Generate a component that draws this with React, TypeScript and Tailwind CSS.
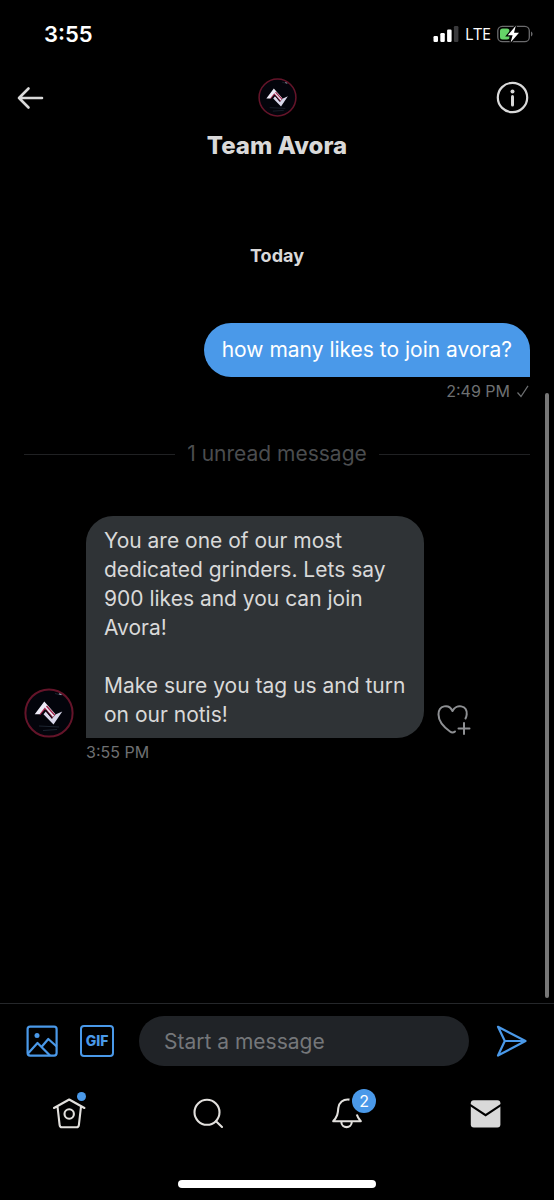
import { useState } from 'react';

function Avatar({ className }: { className: string }) {
  return (
    <svg viewBox="0 0 50 50" className={className} role="img" aria-label="Team Avora">
      <circle cx="25" cy="25" r="23.6" fill="#03040b" stroke="#641429" strokeWidth="2" />
      <path d="M31 5.500l5 1.200M19 42.500l14-1M15 38l20 1" stroke="#1c2430" strokeWidth="1" fill="none" />
      <path d="M35 5.800l2.500 1" stroke="#9aa3b5" strokeWidth="1.200" />
      {/* left half of the mark, then the right half */}
      <path d="M15.500 26.300l5.500-6.500 8 10.200" stroke="#a3264d" strokeWidth="2" fill="none" />
      <path d="M10.700 26.300L20.300 13.500 31.500 26.300 29 29 20.800 19.500 15.500 26.300z" fill="#eceaf6" />
      <path d="M22.500 18l8.500 9.500" stroke="#a3264d" strokeWidth="1.400" />
      <path d="M38.300 23.500L29.500 36.500 19.500 26.300 21.800 23.500 28 30.500 32 26.300z" fill="#d9d7ea" />
      <path d="M21.500 22l6.800 8.300" stroke="#12060f" strokeWidth="1.200" />
    </svg>
  );
}

function StatusBar() {
  return (
    <div className="flex items-center justify-between h-17 pl-11 pr-[21px]">
      <span className="text-[22px] leading-7 font-semibold text-white">3:55</span>
      <div className="flex items-center gap-[6px]">
        <svg width="26" height="16" viewBox="0 0 26 16" aria-hidden="true">
          <rect x="0.500" y="10" width="4.500" height="6" rx="1.200" fill="#fff" />
          <rect x="7.300" y="7" width="4.500" height="9" rx="1.200" fill="#fff" />
          <rect x="14.100" y="3.500" width="4.500" height="12.500" rx="1.200" fill="#fff" />
          <rect x="20.900" y="0" width="4.500" height="16" rx="1.200" fill="#3a3a3c" />
        </svg>
        <span className="font-['Open_Sans','Noto_Sans',sans-serif] text-base leading-6 font-medium text-white">LTE</span>
        <svg width="36" height="18" viewBox="0 0 36 18" aria-hidden="true">
          <rect x="0.800" y="1.300" width="31.500" height="15.400" rx="4.500" fill="none" stroke="#6b6b6d" strokeWidth="1.300" />
          <path d="M34 6.500c2 .8 2 4.200 0 5z" fill="#6b6b6d" />
          <rect x="3" y="3.500" width="9.500" height="11" rx="2.500" fill="#65d268" />
          <path d="M18.800 0.800L10.800 10.200h4.800L13.600 17.500l8.400-9.800h-5z" fill="#fff" stroke="#000" strokeWidth="2.400" paintOrder="stroke" />
        </svg>
      </div>
    </div>
  );
}

function ChatHeader() {
  return (
    <header className="flex flex-col items-center">
      <div className="flex items-center justify-between w-full h-[59px] pl-4 pr-[25px]">
        <button type="button" aria-label="Back" className="w-[42px]">
          <svg width="28" height="24" viewBox="0 0 28 24" fill="none" stroke="#d9d9d9" strokeWidth="2.600" strokeLinecap="round" strokeLinejoin="round">
            <path d="M26 12H3M12.500 2.500L3 12l9.500 9.500" />
          </svg>
        </button>
        <Avatar className="size-[39px]" />
        <button type="button" aria-label="Conversation info">
          <svg width="33" height="33" viewBox="0 0 33 33" fill="none">
            <circle cx="16.500" cy="16.500" r="14.700" stroke="#d9d9d9" strokeWidth="2.200" />
            <circle cx="16.500" cy="10.500" r="2" fill="#d9d9d9" />
            <path d="M16.500 15.500v8.500" stroke="#d9d9d9" strokeWidth="3" strokeLinecap="round" />
          </svg>
        </button>
      </div>
      <h1 className="mt-[3px] text-2xl leading-8 font-extrabold text-[#d9d9d9]">Team Avora</h1>
    </header>
  );
}

function Messages() {
  return (
    <main className="relative flex-1 px-6 pt-[82px] text-[21px]">
      <h2 className="text-center text-lg leading-6 font-bold text-[#d9d9d9]">Today</h2>

      {/* Sent */}
      <div className="flex flex-col items-end mt-[55px]">
        <p className="rounded-[27px] rounded-br-none bg-[#4a99e9] px-[18px] py-3 leading-[30px] text-white">
          how many likes to join avora?
        </p>
        <div className="flex items-center gap-[6px] mt-1 text-base leading-5 text-[#6e7072]">
          <span>2:49 PM</span>
          <svg width="14" height="14" viewBox="0 0 14 14" fill="none" stroke="#6e7072" strokeWidth="1.200" role="img" aria-label="Sent">
            <path d="M1.500 8.500l3.500 4L12 1.800" />
          </svg>
        </div>
      </div>

      <div className="flex items-center gap-3 mt-[38px] leading-[30px] text-[#4b4d4f]">
        <span className="h-px flex-1 bg-[#202123]" />
        <span>1 unread message</span>
        <span className="h-px flex-1 bg-[#202123]" />
      </div>

      {/* Received */}
      <div className="flex items-end mt-[47px]">
        <Avatar className="size-[50px] shrink-0" />
        <div className="ml-3 w-[338px] rounded-[27px] rounded-bl-none bg-[#2f3336] pl-[18px] pr-3 pt-[10px] pb-[9px] leading-[29px] text-[#d9d9d9]">
          <p>You are one of our most dedicated grinders. Lets say 900 likes and you can join Avora!</p>
          <p className="mt-[29px]">Make sure you tag us and turn on our notis!</p>
        </div>
        <button type="button" aria-label="Add reaction" className="ml-3 shrink-0">
          <svg width="36" height="34" viewBox="0 0 36 34" fill="none" stroke="#8e9093" strokeWidth="2" strokeLinecap="round" strokeLinejoin="round">
            <path d="M19 27.500C17.500 28.800 15.500 28.700 14 27.500 7 22.500 2.500 16.500 2.500 10.500 2.500 1 13-.5 16.500 7c3.500-7.500 15-6 14.200 3.500-.1 1.500-.5 2.500-1.200 4" />
            <path d="M28 19v11M22.500 24.500h11" />
          </svg>
        </button>
      </div>
      <div className="ml-[62px] mt-1 text-base leading-5 text-[#6e7072]">3:55 PM</div>

      <div className="absolute right-[5px] top-[231px] bottom-[5px] w-1 rounded-full bg-[#777]" />
    </main>
  );
}

function Composer() {
  const [text, setText] = useState('');

  return (
    <form onSubmit={(e) => e.preventDefault()} className="flex items-center border-t border-[#25272a] pl-[26px] pr-[27px] pt-3 pb-3">
      <button type="button" aria-label="Add photo">
        <svg width="32" height="32" viewBox="0 0 32 32" fill="none" stroke="#4a99e9" strokeWidth="2.200" strokeLinejoin="round">
          <rect x="1.600" y="1.600" width="29" height="29" rx="2.500" />
          <circle cx="11" cy="10.500" r="2.500" fill="#4a99e9" stroke="none" />
          <path d="M2 28.500l9.500-10.500L24 30.500M15.700 21.700l6.600-7.700 8.400 7.500" />
        </svg>
      </button>
      <button
        type="button"
        aria-label="Add GIF"
        className="ml-[22px] flex h-8 w-[34px] items-center justify-center rounded border-2 border-[#4a99e9] text-sm leading-4 font-extrabold text-[#4a99e9]"
      >
        GIF
      </button>
      <input
        type="text"
        aria-label="Message"
        placeholder="Start a message"
        value={text}
        onChange={(e) => setText(e.target.value)}
        className="ml-[25px] h-[50px] min-w-0 flex-1 rounded-full bg-[#202327] px-[25px] text-[21px] text-[#d9d9d9] placeholder:text-[#75777a] focus:outline-none"
      />
      <button type="submit" aria-label="Send" className="ml-[27px]">
        <svg width="31" height="32" viewBox="0 0 31 32" fill="none" stroke="#4a99e9" strokeWidth="2.200" strokeLinejoin="round">
          <path d="M2 1.800L29.500 16 2 30.500 8.800 16zM8.800 16h20" />
        </svg>
      </button>
    </form>
  );
}

function TabBar() {
  return (
    <nav className="grid grid-cols-4 justify-items-center pt-[18px]">
      <a href="#home" aria-label="Home" className="relative">
        <svg width="36" height="36" viewBox="0 0 36 36" fill="none" stroke="#e2e0dd" strokeWidth="2.100" strokeLinecap="round" strokeLinejoin="round">
          <path d="M3 12L18.200 3.500 33.400 12M6.500 10.500l2.100 18.300q.3 2.500 2.400 2.500h14.500q2.100 0 2.400-2.500l2.100-18.300" />
          <circle cx="18.200" cy="18" r="4.700" />
        </svg>
        <span className="absolute left-[26px] -top-1 size-[9px] rounded-full bg-[#4a99e9]" />
      </a>
      <a href="#search" aria-label="Search">
        <svg width="36" height="36" viewBox="0 0 36 36" fill="none" stroke="#e2e0dd" strokeWidth="2.100" strokeLinecap="round">
          <circle cx="17" cy="16.300" r="12.500" />
          <path d="M26 25.200l6 5.800" />
        </svg>
      </a>
      <a href="#notifications" aria-label="Notifications" className="relative">
        <svg width="36" height="36" viewBox="0 0 36 36" fill="none" stroke="#e2e0dd" strokeWidth="2.100" strokeLinejoin="round">
          <path d="M21.500 3.600C15 2.600 10.800 7 10.300 12c-.4 6-1 8.500-5.100 13.300h27.600c-2-2.300-3.300-4.300-4-6.800" />
          <path d="M13.300 25.500c0 7.500 10.500 7.500 10.500 0" />
        </svg>
        <span className="absolute left-6 -top-[7px] flex size-6 items-center justify-center rounded-full bg-[#4a99e9] text-base leading-6 text-white">2</span>
      </a>
      <a href="#messages" aria-label="Messages">
        <svg width="36" height="36" viewBox="0 0 36 36">
          <rect x="3.800" y="4.200" width="29.600" height="27.300" rx="3" fill="#d9d9d9" />
          <path d="M3 8.800L18.600 19.200 34.200 8.800" fill="none" stroke="#000" strokeWidth="2" />
        </svg>
      </a>
    </nav>
  );
}

export default function App() {
  return (
    <div className="flex min-h-screen flex-col bg-black font-['Inter','Liberation_Sans',sans-serif]">
      <StatusBar />
      <ChatHeader />
      <Messages />
      <Composer />
      <TabBar />
      <div className="mx-auto mt-12 mb-3 h-2 w-[198px] rounded-full bg-white" />
    </div>
  );
}
